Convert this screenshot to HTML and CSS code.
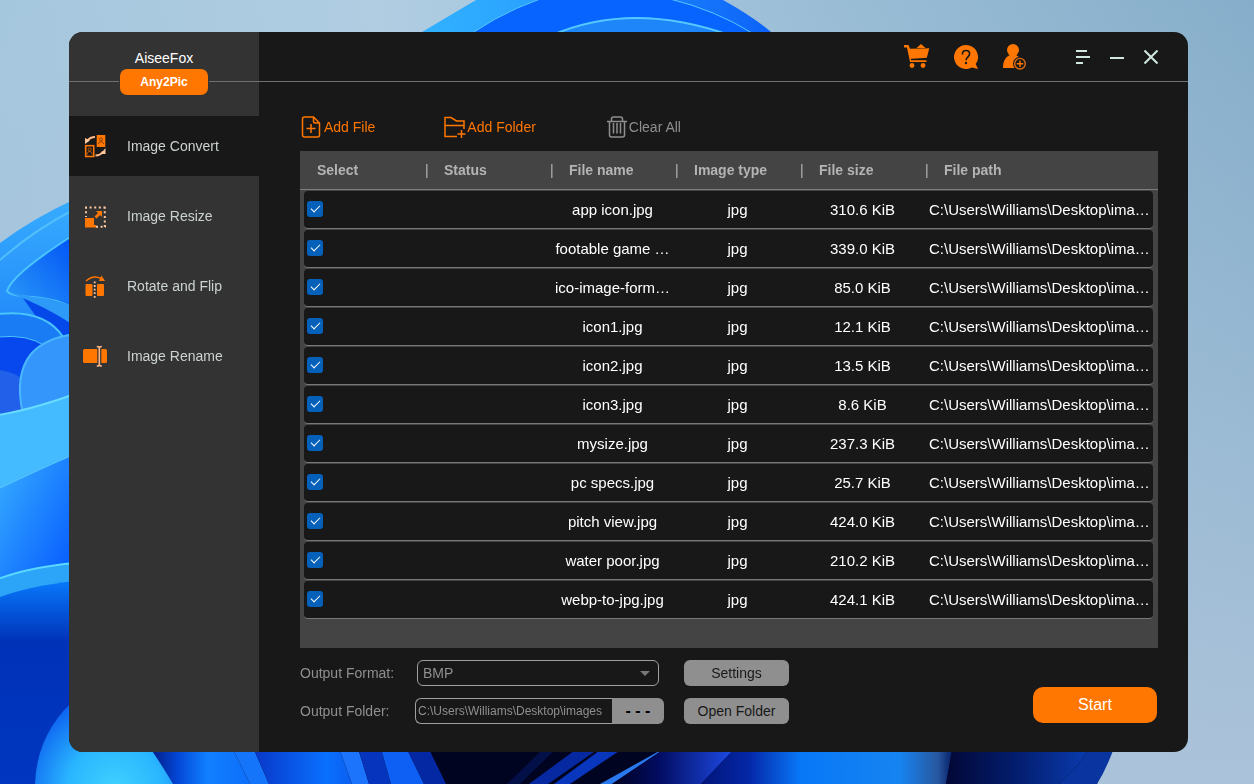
FILE: index.html
```html
<!DOCTYPE html>
<html lang="en">
<head>
    <meta charset="UTF-8" />
    <meta name="viewport" content="width=device-width, initial-scale=1.0"/>
    <title>AiseeFox Any2Pic</title>
    <link rel="stylesheet" href="styles.css">
</head>
<body>
    <!-- Desktop wallpaper -->
    <svg class="wallpaper" viewBox="0 0 1254 784" preserveAspectRatio="none" aria-hidden="true">
        <defs>
            <linearGradient id="leaf" x1="0" y1="1" x2="1" y2="0">
                <stop offset="0" stop-color="#2b9cf8"/><stop offset="1" stop-color="#0050f5"/>
            </linearGradient>
            <linearGradient id="outer" x1="0" y1="0" x2="0" y2="1">
                <stop offset="0" stop-color="#37acff"/><stop offset="1" stop-color="#0a62f2"/>
            </linearGradient>
            <linearGradient id="top" x1="0" y1="0" x2="1" y2="0">
                <stop offset="0" stop-color="#33b4ff"/><stop offset=".35" stop-color="#2aa2ff"/><stop offset="1" stop-color="#0b60f8"/>
            </linearGradient>
            <linearGradient id="fall" x1="0" y1="0" x2="1" y2="1">
                <stop offset="0" stop-color="#38b0ff"/><stop offset="1" stop-color="#0050ff"/>
            </linearGradient>
            <linearGradient id="deep" x1="0" y1="0" x2="0" y2="1">
                <stop offset="0" stop-color="#0878fb"/><stop offset=".3" stop-color="#0032b8"/><stop offset="1" stop-color="#0036c0"/>
            </linearGradient>
            <radialGradient id="cyan" cx="115" cy="790" r="95" gradientUnits="userSpaceOnUse">
                <stop offset="0" stop-color="#41d2ff"/><stop offset=".5" stop-color="#2ab6ff"/><stop offset="1" stop-color="#0d62f0"/>
            </radialGradient>
            <linearGradient id="b1" x1="150" x2="245" y1="0" y2="0" gradientUnits="userSpaceOnUse">
                <stop offset="0" stop-color="#001a80"/><stop offset=".3" stop-color="#0448d8"/><stop offset=".6" stop-color="#1080ff"/><stop offset="1" stop-color="#0e70fa"/>
            </linearGradient>
            <linearGradient id="b2" x1="255" x2="350" y1="0" y2="0" gradientUnits="userSpaceOnUse">
                <stop offset="0" stop-color="#0838c8"/><stop offset=".75" stop-color="#0a70ff"/><stop offset="1" stop-color="#0a60f0"/>
            </linearGradient>
            <linearGradient id="b3" x1="700" x2="950" y1="0" y2="0" gradientUnits="userSpaceOnUse">
                <stop offset="0" stop-color="#021478"/><stop offset=".2" stop-color="#0428a8"/><stop offset=".4" stop-color="#0878f8"/><stop offset=".8" stop-color="#1684f0"/><stop offset=".95" stop-color="#2858a0"/><stop offset="1" stop-color="#0c2870"/>
            </linearGradient>
            <linearGradient id="b4" x1="948" x2="1090" y1="0" y2="0" gradientUnits="userSpaceOnUse">
                <stop offset="0" stop-color="#020838"/><stop offset=".5" stop-color="#031e70"/><stop offset="1" stop-color="#0a3cb0"/>
            </linearGradient>
            <linearGradient id="b5" x1="610" x2="730" y1="0" y2="0" gradientUnits="userSpaceOnUse">
                <stop offset="0" stop-color="#01021c"/><stop offset=".4" stop-color="#020c60"/><stop offset="1" stop-color="#1c48e0"/>
            </linearGradient>
        </defs>

        <!-- top petal -->
        <path fill="url(#top)" d="M400 60L422 32L476 0H723Q752 16 771 32L780 60Z"/>
        <path fill="#0864ff" stroke="#55c8ff" d="M455 46Q492 16 540 -1H670Q715 10 752 33V50Z"/>
        <path fill="#1f86fa" stroke="#55c8ff" stroke-width="2" d="M550 36Q632 0 732 36"/>

        <!-- left petals -->
        <path fill="url(#outer)" d="M0 243Q32 219 75 199V470H0Z"/>
        <path fill="none" stroke="#52bffb" stroke-width="2" d="M0 260Q34 230 75 209"/>
        <path fill="#0448ea" d="M20 294H30L75 312V350H60Z"/>
        <path fill="url(#leaf)" stroke="#4ac4fc" stroke-width="2" d="M75 234Q12 274 7 291Q10 296 32 297Q55 298 75 309"/>
        <path fill="#2e9af8" d="M10 293L34 297Q55 298 75 308V326Q45 306 10 293Z"/>
        <path fill="#1a7cf4" stroke="#4ac4fc" stroke-width="2" d="M-2 314Q45 309 63 337V420H-2Z"/>
        <path fill="#0648ee" stroke="#4ac4fc" d="M-2 337Q28 334 45 346V420H-2Z"/>
        <path fill="#2260ea" d="M0 370Q14 372 24 380V420H0Z"/>
        <path fill="#3496fb" stroke="#4ab8fc" stroke-width="2" d="M75 334Q45 338 31 354Q14 375 23 414H75Z"/>
        <path fill="#44baff" stroke="#68dcff" stroke-width="2" d="M-2 415Q30 410 75 394V470L-2 500Z"/>
        <path fill="url(#fall)" stroke="#58c8ff" d="M-2 489Q40 469 75 454V600H-2Z"/>
        <path fill="#2ca4f8" stroke="#5ad8ff" stroke-width="2" d="M-2 579Q30 567 75 563V610H-2Z"/>
        <path fill="url(#deep)" d="M0 597Q30 586 75 581V784H0Z"/>

        <!-- bottom petals -->
        <path fill="#010420" d="M150 745H1110L1097 784H150Z"/>
        <path fill="url(#b1)" d="M140 745H231L250 784H140Z"/>
        <path fill="#1474fa" d="M231 745L250 784H269L252 745Z"/>
        <path fill="url(#b2)" d="M252 745L269 784H352L338 745Z"/>
        <path fill="#1c74fc" d="M338 745L352 784H369L357 745Z"/>
        <path fill="#0634bc" d="M357 745L369 784H391L380 745Z"/>
        <path fill="#0e60f4" d="M380 745L391 784H424L405 745Z"/>
        <path fill="#0428a4" d="M405 745L424 784H446L427 745Z"/>
        <path fill="#031048" d="M547 745L507 784H520L560 745Z"/>
        <path fill="#0628a0" d="M582 745L529 784H548L604 745Z"/>
        <path fill="#0836bc" d="M607 745L554 784H570L628 745Z"/>
        <path fill="#2878ee" d="M670 745L600 784H612L670 745Z"/>
        <path fill="url(#b5)" d="M670 745L612 784H701L738 745Z"/>
        <path fill="url(#b3)" d="M738 745L701 784H946L953 745Z"/>
        <path fill="url(#b4)" d="M953 745L946 784H1059Q1078 768 1091 745Z"/>
        <path fill="#0a34a0" d="M1091 745Q1078 768 1059 784H1097Q1107 768 1115 745Z"/>
        <path fill="url(#cyan)" d="M80 695Q37 730 35 784H173Q160 762 148 745Z"/>
    </svg>

    <div class="window">
        <aside class="sidebar">
            <div class="brand">
                <span class="brand-name">AiseeFox</span>
                <span class="badge">Any2Pic</span>
            </div>
            <nav>
                <a href="#convert" class="active">
                    <svg viewBox="0 0 26 26">
                        <rect x="14.700" y="2" width="8.600" height="12" fill="#ff7600"/>
                        <rect x="3.700" y="12.700" width="8" height="10.800" fill="none" stroke="#ff7600" stroke-width="1.600"/>
                        <g fill="none" stroke="#8a3f00"><circle cx="19" cy="6.500" r="1.500"/><path d="M16.500 11c0-3 5-3 5 0"/></g>
                        <g fill="none" stroke="#c65c00"><circle cx="7.600" cy="16.500" r="1.500"/><path d="M5.200 21.500c0-4 5-4 5 0"/></g>
                        <path d="M13 4C9 4 7 5.500 5 8M13.500 22.500c4 0 6-1.500 7.500-4" fill="none" stroke="#ffb988" stroke-width="2"/>
                        <path d="M3 5v6l5-3.500zM23.500 15v6h-5z" fill="#ffc79c"/>
                    </svg>
                    Image Convert
                </a>
                <a href="#resize">
                    <svg viewBox="0 0 26 26">
                        <path d="M3 4.500H24M4 3.700V14M22.800 3.700V25M14 23.700H24" fill="none" stroke="#ffc79c" stroke-width="2" stroke-dasharray="2 2.600"/>
                        <path d="M3 15h9v7h2v2.500H3zM12.500 13.500L16 10l-2-2h6v6l-2-2-3.500 3.500z" fill="#ff7600"/>
                    </svg>
                    Image Resize
                </a>
                <a href="#rotate">
                    <svg viewBox="0 0 26 26">
                        <rect x="3.500" y="11" width="7" height="12" rx="1" fill="#ff7600"/>
                        <rect x="15" y="11" width="7" height="12" rx="1" fill="#ff7600"/>
                        <path d="M12.700 8.500V26" stroke="#ffc79c" stroke-width="1.800" stroke-dasharray="1.800 1.800"/>
                        <path d="M4 8Q11 1.500 19 5.500" fill="none" stroke="#ff7600" stroke-width="1.500"/>
                        <path d="M19.500 2.500l3.500 5.500h-6z" fill="#ff7600"/>
                    </svg>
                    Rotate and Flip
                </a>
                <a href="#rename">
                    <svg viewBox="0 0 26 26">
                        <rect x="1" y="6" width="24" height="14" rx="1.500" fill="#ff7600"/>
                        <path d="M17.300 5v18" stroke="#333" stroke-width="4"/>
                        <path d="M17.300 4v18.500M14.800 3.500q2.500 0 2.500 1.500 0-1.500 2.500-1.500M14.800 23q2.500 0 2.500-1.500 0 1.500 2.500 1.500" fill="none" stroke="#ffb988" stroke-width="1.600"/>
                    </svg>
                    Image Rename
                </a>
            </nav>
        </aside>

        <main>
            <header class="topbar">
                <div class="shop">
                    <button aria-label="Buy">
                        <svg viewBox="0 0 26 26" fill="#ff7600">
                            <path d="M0 1h4.500L6 4.800l19.300-.5-2.500 9.500L7 15v1.300h15.500v1.800H6L3 3.500H0zM12.500 4L17 0l4.500 4z"/>
                            <path d="M7 15.300h15.500" stroke="#181818"/>
                            <circle cx="8" cy="21.500" r="2.400"/><circle cx="19" cy="21.500" r="2.400"/>
                        </svg>
                    </button>
                    <button aria-label="Help">
                        <svg viewBox="0 0 26 26">
                            <path d="M13 1a12 12 0 1 0 6 22.400L25 25l-2.300-5A12 12 0 0 0 13 1z" fill="#ff7600"/>
                            <path d="M9.500 10.500V10c0-2 1.500-3.500 3.500-3.500s3.600 1.400 3.600 3.300c0 3-3.600 3.500-3.600 6.400" fill="none" stroke="#181818" stroke-width="1.600"/>
                            <circle cx="13" cy="19" r="1.200" fill="#181818"/>
                        </svg>
                    </button>
                    <button aria-label="Account">
                        <svg viewBox="0 0 26 26">
                            <circle cx="11" cy="6" r="6" fill="#ff7600"/>
                            <path d="M1 24c0-6 1.500-10.500 7-13h6c3 1.500 5 3.500 5.500 6v7z" fill="#ff7600"/>
                            <circle cx="18" cy="19.700" r="7" fill="#181818"/>
                            <circle cx="18" cy="19.700" r="5.300" fill="none" stroke="#e06a10" stroke-width="1.400"/>
                            <path d="M18 16.500v6.400M14.800 19.700h6.400" stroke="#ff7600" stroke-width="1.400"/>
                        </svg>
                    </button>
                </div>
                <div class="controls">
                    <button aria-label="Menu"><svg viewBox="0 0 16 16"><path d="M2 2h11M2 8h14M2 14h7"/></svg></button>
                    <button aria-label="Minimize"><svg viewBox="0 0 16 16"><path d="M1 9h14"/></svg></button>
                    <button aria-label="Close"><svg viewBox="0 0 16 16"><path d="M.500 1.500l13 13M13.500 1.500l-13 13"/></svg></button>
                </div>
            </header>

            <div class="content">
                <div class="toolbar">
                    <button>
                        <svg viewBox="0 0 22 22"><path d="M12.500 1H3.500Q1.500 1 1.500 3v16q0 2 2 2h13q2 0 2-2V7zM12.500 1v4.500q0 1.500 1.500 1.500h4.500M10 8v9M5.500 12.500h9"/></svg>
                        Add File
                    </button>
                    <button>
                        <svg viewBox="0 0 22 22"><path d="M13 20.500H1V1.500h6L12.500 5H20v8M1 9.500h19M17.500 14v8M13.500 18h8"/></svg>
                        Add Folder
                    </button>
                    <button class="clear">
                        <svg viewBox="0 0 22 22"><path d="M1 5.500h20M5.500 5V3q0-2 2-2h7q2 0 2 2v2M3.500 5.500V19q0 2 2 2h11q2 0 2-2V5.500M7.500 7v10.500M11 7v10.500M14.500 7v10.500"/></svg>
                        Clear All
                    </button>
                </div>

                <div class="file-panel">
                    <table>
                        <thead>
                            <tr>
                                <th class="col-select">Select</th>
                                <th class="col"><span>|</span>Status</th>
                                <th class="col"><span>|</span>File name</th>
                                <th class="col"><span>|</span>Image type</th>
                                <th class="col"><span>|</span>File size</th>
                                <th><span>|</span>File path</th>
                            </tr>
                        </thead>
                        <tbody>
                            <tr><td><input type="checkbox" aria-label="app icon.jpg" checked></td><td></td><td>app icon.jpg</td><td>jpg</td><td>310.6 KiB</td><td>C:\Users\Williams\Desktop\ima…</td></tr>
                            <tr><td><input type="checkbox" aria-label="footable game" checked></td><td></td><td>footable game …</td><td>jpg</td><td>339.0 KiB</td><td>C:\Users\Williams\Desktop\ima…</td></tr>
                            <tr><td><input type="checkbox" aria-label="ico-image-form" checked></td><td></td><td>ico-image-form…</td><td>jpg</td><td>85.0 KiB</td><td>C:\Users\Williams\Desktop\ima…</td></tr>
                            <tr><td><input type="checkbox" aria-label="icon1.jpg" checked></td><td></td><td>icon1.jpg</td><td>jpg</td><td>12.1 KiB</td><td>C:\Users\Williams\Desktop\ima…</td></tr>
                            <tr><td><input type="checkbox" aria-label="icon2.jpg" checked></td><td></td><td>icon2.jpg</td><td>jpg</td><td>13.5 KiB</td><td>C:\Users\Williams\Desktop\ima…</td></tr>
                            <tr><td><input type="checkbox" aria-label="icon3.jpg" checked></td><td></td><td>icon3.jpg</td><td>jpg</td><td>8.6 KiB</td><td>C:\Users\Williams\Desktop\ima…</td></tr>
                            <tr><td><input type="checkbox" aria-label="mysize.jpg" checked></td><td></td><td>mysize.jpg</td><td>jpg</td><td>237.3 KiB</td><td>C:\Users\Williams\Desktop\ima…</td></tr>
                            <tr><td><input type="checkbox" aria-label="pc specs.jpg" checked></td><td></td><td>pc specs.jpg</td><td>jpg</td><td>25.7 KiB</td><td>C:\Users\Williams\Desktop\ima…</td></tr>
                            <tr><td><input type="checkbox" aria-label="pitch view.jpg" checked></td><td></td><td>pitch view.jpg</td><td>jpg</td><td>424.0 KiB</td><td>C:\Users\Williams\Desktop\ima…</td></tr>
                            <tr><td><input type="checkbox" aria-label="water poor.jpg" checked></td><td></td><td>water poor.jpg</td><td>jpg</td><td>210.2 KiB</td><td>C:\Users\Williams\Desktop\ima…</td></tr>
                            <tr><td><input type="checkbox" aria-label="webp-to-jpg.jpg" checked></td><td></td><td>webp-to-jpg.jpg</td><td>jpg</td><td>424.1 KiB</td><td>C:\Users\Williams\Desktop\ima…</td></tr>
                        </tbody>
                    </table>
                </div>

                <div class="output">
                    <div class="output-form">
                        <label for="format">Output Format:</label>
                        <div class="select-wrap">
                            <select id="format">
                                <option>BMP</option>
                                <option>JPG</option>
                                <option>PNG</option>
                            </select>
                        </div>
                        <button class="gray">Settings</button>
                        <label for="folder">Output Folder:</label>
                        <div class="folder-wrap">
                            <input type="text" id="folder" value="C:\Users\Williams\Desktop\images">
                            <button class="browse">- - -</button>
                        </div>
                        <button class="gray">Open Folder</button>
                    </div>
                    <button class="start">Start</button>
                </div>
            </div>
        </main>
    </div>
</body>
</html>
```
FILE: styles.css
```css
* {
    box-sizing: border-box;
}

body {
    margin: 0;
    min-height: 100vh;
    padding: 32px 66px 32px 69px;
    font-family: "Liberation Sans", Arial, sans-serif;
    font-size: 14px;
    background: linear-gradient(to bottom, transparent, #abc3da), linear-gradient(to right, #a5c7de, #b0cde2 30%, #86aeca);
}

button, input, select {
    font-family: inherit;
    font-size: inherit;
}

button {
    border: none;
    background: none;
    padding: 0;
    cursor: pointer;
}

svg {
    display: block;
    flex: none;
}

/* Sits behind the app window */
.wallpaper {
    position: fixed;
    top: 0;
    left: 0;
    width: 100%;
    height: 100%;
    z-index: -1;
}

.window {
    display: flex;
    min-height: 720px;
    border-radius: 14px;
    overflow: hidden;
    background-color: #181818;
}

/* Sidebar */
.sidebar {
    flex: none;
    width: 190px;
    background-color: #333;
}

.brand {
    display: flex;
    flex-direction: column;
    align-items: center;
    height: 84px;
    padding-top: 16px;
    background: linear-gradient(#6f6f6f, #6f6f6f) 0 49px / 100% 1px no-repeat;
}

.brand-name {
    line-height: 20px;
    margin-bottom: 1px;
    color: #fff;
}

.badge {
    width: 88px;
    line-height: 26px;
    border-radius: 7px;
    box-shadow: 0 0 0 1px #333;
    background-color: #ff7600;
    color: #fff;
    font-size: 12px;
    font-weight: bold;
    text-align: center;
}

nav {
    display: flex;
    flex-direction: column;
    gap: 10px;
}

nav a {
    display: flex;
    align-items: center;
    gap: 19px;
    height: 60px;
    padding-left: 13px;
    color: #ccd2d2;
    text-decoration: none;
}

nav a.active {
    background-color: #181818;
}

nav svg, .shop svg {
    width: 26px;
    height: 26px;
}

main {
    flex: 1;
    min-width: 0;
}

/* Title bar */
.topbar {
    display: flex;
    justify-content: flex-end;
    align-items: center;
    gap: 46px;
    height: 50px;
    padding-right: 28px;
    border-bottom: 1px solid #6f6f6f;
}

.shop {
    display: flex;
    gap: 23px;
}

.controls {
    display: flex;
    gap: 19px;
}

.controls svg {
    width: 16px;
    height: 16px;
    fill: none;
    stroke: #d0e6e0;
    stroke-width: 2;
}

.content {
    padding: 34px 30px 27px 41px;
}

/* Toolbar */
.toolbar {
    display: flex;
    gap: 69px;
    padding: 0 0 13px 1px;
}

.toolbar button {
    display: flex;
    align-items: center;
    gap: 1px;
    line-height: 22px;
    color: #ff7600;
}

.toolbar svg {
    width: 22px;
    height: 22px;
    fill: none;
    stroke: currentColor;
    stroke-width: 1.5;
}

.toolbar .clear {
    margin-left: 1px;
    color: #8f8f8f;
}

/* File list, with the header rule drawn across the full panel */
.file-panel {
    padding: 0 5px 28px 4px;
    background: #444 linear-gradient(#7d7d7d, #7d7d7d) 0 38px / 100% 1px no-repeat;
}

table {
    width: 100%;
    table-layout: fixed;
    border-collapse: separate;
    border-spacing: 0 1px;
}

th {
    height: 38px;
    padding: 0 0 2px;
    color: #b4b4b4;
    text-align: left;
    white-space: nowrap;
}

th span {
    display: inline-block;
    width: 19px;
    font-weight: normal;
}

.col-select {
    width: 121px;
    padding-left: 13px;
}

.col {
    width: 125px;
}

td {
    height: 38px;
    padding: 0 4px;
    border-bottom: 1px solid #777;
    background-color: #181818;
    color: #fff;
    font-size: 15px;
    text-align: center;
    white-space: nowrap;
    overflow: hidden;
    text-overflow: ellipsis;
}

td:first-child {
    padding: 0 3px;
    border-radius: 4px 0 0 4px;
    text-align: left;
}

td:last-child {
    padding-right: 0;
    border-radius: 0 4px 4px 0;
    text-align: left;
}

td input {
    appearance: none;
    display: flex;
    justify-content: center;
    align-items: center;
    width: 16px;
    height: 16px;
    margin: 0 0 2px;
    border-radius: 3px;
    background-color: #444;
}

td input:checked {
    background-color: #0560ba;
}

td input:checked::after {
    content: "";
    width: 8px;
    height: 4px;
    margin-bottom: 2px;
    border: solid #fff;
    border-width: 0 0 1px 1px;
    transform: rotate(-45deg);
}

/* Output settings */
.output {
    display: flex;
    justify-content: space-between;
    align-items: flex-end;
    padding: 12px 1px 0 0;
}

.output-form {
    display: grid;
    grid-template-columns: 115px 249px 125px;
    grid-auto-rows: 26px;
    align-items: center;
    row-gap: 12px;
    color: #8f8f8f;
}

.output-form .gray {
    height: 26px;
    margin-left: 20px;
    border-radius: 6px;
    background-color: #8f8f8f;
    color: #181818;
}

.select-wrap {
    position: relative;
    margin: 0 5px 0 2px;
}

.select-wrap::after {
    content: "";
    position: absolute;
    top: 11px;
    right: 9px;
    border: 5px solid transparent;
    border-top-color: #777;
    pointer-events: none;
}

select {
    display: block;
    appearance: none;
    width: 100%;
    height: 26px;
    padding: 0 5px;
    border: 1px solid #a0a0a0;
    border-radius: 6px;
    background-color: #181818;
    color: #8f8f8f;
}

.folder-wrap {
    display: flex;
    height: 26px;
}

.folder-wrap input {
    flex: 1;
    min-width: 0;
    padding: 0 2px;
    border: 1px solid #a0a0a0;
    border-right: none;
    border-radius: 6px 0 0 6px;
    background-color: #181818;
    color: #8f8f8f;
    font-size: 12px;
}

.browse {
    width: 52px;
    border-radius: 0 6px 6px 0;
    background-color: #8f8f8f;
    color: #000;
    font-size: 16px;
    font-weight: bold;
}

.start {
    width: 124px;
    height: 36px;
    margin-bottom: 1px;
    border-radius: 10px;
    background-color: #ff7600;
    color: #fff;
    font-size: 16px;
}
```
